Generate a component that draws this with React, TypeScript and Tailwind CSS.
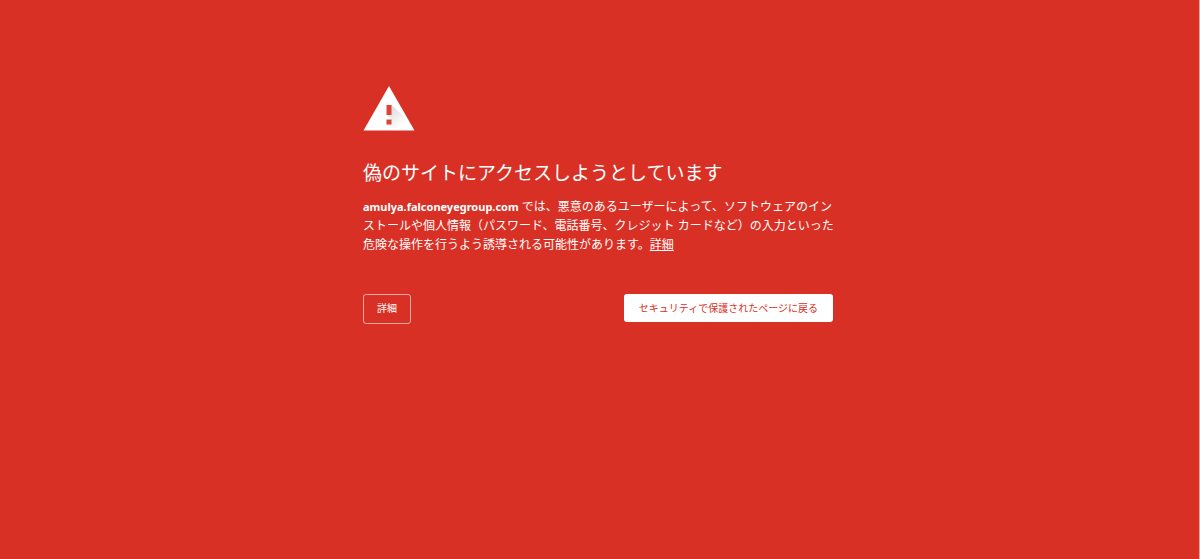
function WarningIcon() {
	return (
		<svg viewBox="0 0 52 45" className="h-[45px] w-[52px]" aria-hidden="true">
			<defs>
				<linearGradient id="shade" x1="27" y1="22" x2="40" y2="38" gradientUnits="userSpaceOnUse">
					<stop offset="0" stopColor="#dcdcdc" />
					<stop offset="1" stopColor="#ffffff" />
				</linearGradient>
			</defs>
			<path d="M26 0 51.5 44.5H.5Z" fill="#ffffff" />
			<path d="M28.5 19 41.5 31 49 44H33L24 38.500l4.500-4.500-4.500-5Z" fill="url(#shade)" />
			<path d="M23.5 19h5v10h-5zM23.5 33.5h5v5h-5z" fill="#db4437" />
		</svg>
	);
}

function App() {
	return (
		<main
			lang="ja"
			className="min-h-screen border-r border-[#f3a19b] bg-[#d93025] pt-[86px] pr-[19px] pb-10 pl-4 text-white
				font-['Noto_Sans','Noto_Sans_CJK_JP',sans-serif]"
		>
			<div className="mx-auto w-full max-w-[470px]">
				<WarningIcon />
				<h1 className="mt-[30px] text-[19px] leading-6 font-normal">
					偽のサイトにアクセスしようとしています
				</h1>
				<p className="mt-3 text-xs leading-[19px] sm:whitespace-nowrap">
					<strong className="text-[11px] font-bold">amulya.falconeyegroup.com</strong>{" "}
					では、悪意のあるユーザーによって、ソフトウェアのイン
					<br />
					ストールや個人情報（パスワード、電話番号、クレジット カードなど）の入力といった
					<br />
					危険な操作を行うよう誘導される可能性があります。
					<a href="#details" className="underline">
						詳細
					</a>
				</p>
				<div className="mt-10 flex items-start justify-between">
					<button
						type="button"
						className="h-[30px] rounded-[3px] border border-[#f0a8a4] px-[13px] pb-0.5 text-[10px]"
					>
						詳細
					</button>
					<button
						type="button"
						className="h-7 rounded-[3px] bg-white px-[15px] text-[10px] text-[#d93025]"
					>
						セキュリティで保護されたページに戻る
					</button>
				</div>
			</div>
		</main>
	);
}

export default App;
